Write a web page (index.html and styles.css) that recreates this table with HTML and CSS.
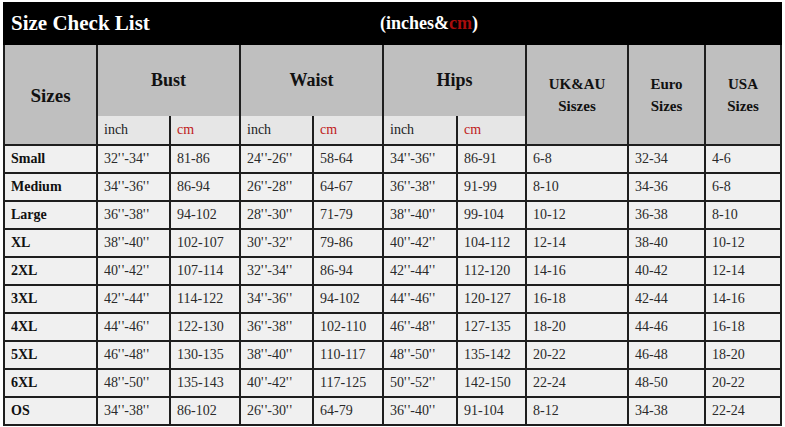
FILE: index.html
```html
<!DOCTYPE html>
<html>
<head>
<meta charset="utf-8">
<link rel="stylesheet" href="styles.css">
</head>
<body>
<div class="wrap">
  <div class="titlebar">
    <div class="title">Size Check List</div>
    <div class="units">(inches&amp;<span class="red">cm</span>)</div>
  </div>
  <div class="chart">
    <div class="hcell sizes">Sizes</div>
    <div class="group g1">
      <div class="gtitle">Bust</div>
      <div class="sub"><div class="sc">inch</div><div class="sc red">cm</div></div>
    </div>
    <div class="group g2">
      <div class="gtitle">Waist</div>
      <div class="sub"><div class="sc">inch</div><div class="sc red">cm</div></div>
    </div>
    <div class="group g3">
      <div class="gtitle">Hips</div>
      <div class="sub"><div class="sc">inch</div><div class="sc red">cm</div></div>
    </div>
    <div class="hcell small">UK&amp;AU<br>Siszes</div>
    <div class="hcell small">Euro<br>Sizes</div>
    <div class="hcell small">USA<br>Sizes</div>

    <div class="c lbl">Small</div><div class="c">32'&#8202;'-34'&#8202;'</div><div class="c">81-86</div><div class="c">24'&#8202;'-26'&#8202;'</div><div class="c">58-64</div><div class="c">34'&#8202;'-36'&#8202;'</div><div class="c">86-91</div><div class="c">6-8</div><div class="c">32-34</div><div class="c">4-6</div>
    <div class="c lbl">Medium</div><div class="c">34'&#8202;'-36'&#8202;'</div><div class="c">86-94</div><div class="c">26'&#8202;'-28'&#8202;'</div><div class="c">64-67</div><div class="c">36'&#8202;'-38'&#8202;'</div><div class="c">91-99</div><div class="c">8-10</div><div class="c">34-36</div><div class="c">6-8</div>
    <div class="c lbl">Large</div><div class="c">36'&#8202;'-38'&#8202;'</div><div class="c">94-102</div><div class="c">28'&#8202;'-30'&#8202;'</div><div class="c">71-79</div><div class="c">38'&#8202;'-40'&#8202;'</div><div class="c">99-104</div><div class="c">10-12</div><div class="c">36-38</div><div class="c">8-10</div>
    <div class="c lbl">XL</div><div class="c">38'&#8202;'-40'&#8202;'</div><div class="c">102-107</div><div class="c">30'&#8202;'-32'&#8202;'</div><div class="c">79-86</div><div class="c">40'&#8202;'-42'&#8202;'</div><div class="c">104-112</div><div class="c">12-14</div><div class="c">38-40</div><div class="c">10-12</div>
    <div class="c lbl">2XL</div><div class="c">40'&#8202;'-42'&#8202;'</div><div class="c">107-114</div><div class="c">32'&#8202;'-34'&#8202;'</div><div class="c">86-94</div><div class="c">42'&#8202;'-44'&#8202;'</div><div class="c">112-120</div><div class="c">14-16</div><div class="c">40-42</div><div class="c">12-14</div>
    <div class="c lbl">3XL</div><div class="c">42'&#8202;'-44'&#8202;'</div><div class="c">114-122</div><div class="c">34'&#8202;'-36'&#8202;'</div><div class="c">94-102</div><div class="c">44'&#8202;'-46'&#8202;'</div><div class="c">120-127</div><div class="c">16-18</div><div class="c">42-44</div><div class="c">14-16</div>
    <div class="c lbl">4XL</div><div class="c">44'&#8202;'-46'&#8202;'</div><div class="c">122-130</div><div class="c">36'&#8202;'-38'&#8202;'</div><div class="c">102-110</div><div class="c">46'&#8202;'-48'&#8202;'</div><div class="c">127-135</div><div class="c">18-20</div><div class="c">44-46</div><div class="c">16-18</div>
    <div class="c lbl">5XL</div><div class="c">46'&#8202;'-48'&#8202;'</div><div class="c">130-135</div><div class="c">38'&#8202;'-40'&#8202;'</div><div class="c">110-117</div><div class="c">48'&#8202;'-50'&#8202;'</div><div class="c">135-142</div><div class="c">20-22</div><div class="c">46-48</div><div class="c">18-20</div>
    <div class="c lbl">6XL</div><div class="c">48'&#8202;'-50'&#8202;'</div><div class="c">135-143</div><div class="c">40'&#8202;'-42'&#8202;'</div><div class="c">117-125</div><div class="c">50'&#8202;'-52'&#8202;'</div><div class="c">142-150</div><div class="c">22-24</div><div class="c">48-50</div><div class="c">20-22</div>
    <div class="c lbl">OS</div><div class="c">34'&#8202;'-38'&#8202;'</div><div class="c">86-102</div><div class="c">26'&#8202;'-30'&#8202;'</div><div class="c">64-79</div><div class="c">36'&#8202;'-40'&#8202;'</div><div class="c">91-104</div><div class="c">8-12</div><div class="c">34-38</div><div class="c">22-24</div>
  </div>
</div>
</body>
</html>
```

FILE: styles.css
```css
html, body {
  margin: 0;
  padding: 0;
  background: #ffffff;
}
body {
  font-family: "Liberation Serif", "Times New Roman", serif;
  color: #111;
}
.wrap {
  padding: 2px 3px 0 3px;
  width: 779px;
}
.titlebar {
  background: #000;
  height: 43px;
  display: grid;
  grid-template-columns: 377px 1fr;
  align-items: center;
  color: #fff;
  font-weight: bold;
}
.title {
  padding-left: 8px;
  font-size: 21px;
}
.units {
  font-size: 18px;
}
.titlebar .red {
  color: #a80c0c;
}
.chart {
  display: grid;
  grid-template-columns: 91px 71px 68px 71px 68px 72px 67px 100px 75px 74px;
  grid-template-rows: 99px repeat(10, 26px);
  gap: 2px;
  padding: 0 2px 2px 2px;
  background: #1e1e1e;
}
.hcell {
  background: #bfbfbf;
  display: flex;
  align-items: center;
  justify-content: center;
  text-align: center;
  font-weight: bold;
}
.sizes {
  font-size: 19px;
  padding-top: 2px;
}
.small {
  font-size: 15px;
  line-height: 22px;
}
.group {
  grid-column: span 2;
  display: flex;
  flex-direction: column;
  background: #bfbfbf;
}
.gtitle {
  flex: 1;
  display: flex;
  align-items: center;
  justify-content: center;
  font-weight: bold;
  font-size: 18px;
}
.sub {
  height: 28px;
  display: grid;
  gap: 2px;
  background: #1e1e1e;
}
.g1 .sub, .g2 .sub {
  grid-template-columns: 71px 68px;
}
.g3 .sub {
  grid-template-columns: 72px 67px;
}
.sc {
  background: #e6e6e6;
  font-size: 14px;
  display: flex;
  align-items: center;
  padding-left: 6px;
  color: #222;
}
.sc.red {
  color: #c0201a;
}
.c {
  background: #f0f0f0;
  font-size: 14px;
  display: flex;
  align-items: center;
  padding-left: 6px;
  color: #2a2a2a;
}
.c.lbl {
  font-weight: bold;
  color: #111;
}
```
